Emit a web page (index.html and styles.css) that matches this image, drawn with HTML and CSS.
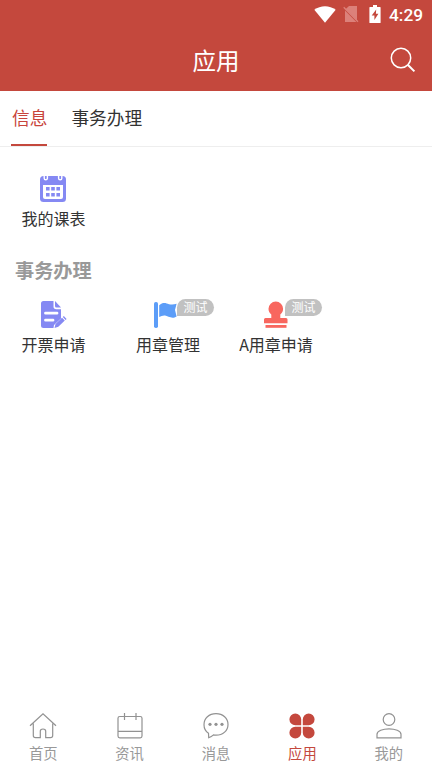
FILE: index.html
```html
<!DOCTYPE html>
<html lang="zh-CN">
<head>
<meta charset="UTF-8">
<meta name="viewport" content="width=device-width, initial-scale=1">
<title>应用</title>
<link rel="stylesheet" href="styles.css">
</head>
<body>
<div class="app">
  <header class="header">
    <div class="status">
      <svg class="wifi" width="22" height="17" viewBox="0 0 22 17"><path d="M.3 3.700C6.500-1 15.500-1 21.700 3.700L11 16.800z" fill="#fff"/></svg>
      <svg class="sim" width="16" height="18" viewBox="0 0 16 18"><path d="M6 1h8v14.500L2.500 4.200zM2 5.600V17h11.400z" fill="#dc817a"/><path d="M.7 2.200L15 16.700" stroke="#dc817a" stroke-width="1.300"/></svg>
      <svg class="battery" width="12" height="18" viewBox="0 0 12 18"><path d="M4 0h4v2h3q.6 0 .6.600v14.800q0 .6-.6.600H1q-.6 0-.6-.6V2.600Q.4 2 1 2h3z" fill="#fff"/><path d="M7.200 4.400L2.700 10.500h2.700v4.600L9.400 8.800H6.900z" fill="#c4483d"/></svg>
      <span class="clock">4:29</span>
    </div>
    <div class="titlebar">
      <h1 class="title">应用</h1>
      <svg class="search" width="28" height="28" viewBox="0 0 28 28" fill="none" stroke="#fff"><circle cx="12" cy="12" r="9.700" stroke-width="1.500"/><path d="M19 19l6.400 6.400" stroke-width="2"/></svg>
    </div>
  </header>
  <nav class="tabs">
    <span class="tab active">信息</span>
    <span class="tab">事务办理</span>
  </nav>
  <main class="content">
    <div class="grid">
      <div class="item">
        <svg width="28" height="28" viewBox="0 0 28 28"><path d="M4.500 2h19Q27 2 27 5.500v19q0 3.500-3.500 3.500h-19Q1 28 1 24.500v-19Q1 2 4.500 2z" fill="#8589f3"/><path d="M4 11h20v12q0 2-2 2H6q-2 0-2-2z" fill="#fff"/><path d="M5.200 1v3.200a1.600 1.600 0 0 0 3.200 0V1M19.600 1v3.200a1.600 1.600 0 0 0 3.200 0V1" fill="none" stroke="#fff" stroke-width="1.400"/><path d="M7 14.700h14M7 20.700h14" stroke="#8589f3" stroke-width="3.400" stroke-dasharray="3.600 1.600"/></svg>
        <span class="label">我的课表</span>
      </div>
    </div>
    <h2 class="section">事务办理</h2>
    <div class="grid second">
      <div class="item">
        <svg width="28" height="28" viewBox="0 0 28 28"><path d="M4.500 1h10v5.500q0 2.800 2.800 2.800H22v9.200L15 25l-.5 3h-10Q2 28 2 25.500v-22Q2 1 4.500 1z" fill="#8589f3"/><path d="M16 1l6 6.500h-4.500q-1.500 0-1.500-1.500z" fill="#8589f3"/><path d="M6.500 13.200H18M6.500 20.200H14" stroke="#fff" stroke-width="2.800" stroke-linecap="round"/><path d="M15.500 28l1-4 6.500-6.300 2.800 2.800-6.500 6.300zM23.800 17l1-.9 2.800 2.800-1 1z" fill="#8589f3"/></svg>
        <span class="label">开票申请</span>
      </div>
      <div class="item">
        <svg width="28" height="28" viewBox="0 0 28 28" fill="#5c9df8"><rect x="0" y="2" width="4" height="26" rx="1.800"/><path d="M5.200 5.200C9 1.600 12 3 15 4.200q3.500 1 7.600-.4L21 10l1.600 6.400C18 19.500 14 16 11 15.500q-3-.3-5.800 1.600z"/></svg>
        <span class="label">用章管理</span>
        <span class="badge">测试</span>
      </div>
      <div class="item">
        <svg width="28" height="28" viewBox="0 0 28 28" fill="#f8675f"><path d="M9.300 18v-3.500C7.500 13.300 6.500 11 6.500 8.800a7.300 7.300 0 0 1 14.600 0c0 2.200-1 4.500-2.800 5.700V18H24q1.500 0 1.500 1.500v3.700H2v-3.700Q2 18 3.500 18z"/><rect x="3.500" y="25" width="21" height="2.800"/></svg>
        <span class="label">A用章申请</span>
        <span class="badge">测试</span>
      </div>
    </div>
  </main>
  <footer class="bottom">
    <div class="nav">
      <svg width="28" height="28" viewBox="0 0 28 28"><path d="M1 13.700L14 1.700l13 12M4.300 11.500v12q0 2.200 2.200 2.200h4.800v-6.500q0-2.200 2.700-2.200t2.700 2.200v6.500h4.800q2.200 0 2.200-2.200v-12"/></svg>
      <span>首页</span>
    </div>
    <div class="nav">
      <svg width="28" height="28" viewBox="0 0 28 28"><rect x="2" y="4.500" width="24" height="21.300" rx="1.800"/><path d="M8.500 1v7M20 1v7M2 19.300h24"/></svg>
      <span>资讯</span>
    </div>
    <div class="nav">
      <svg width="28" height="28" viewBox="0 0 28 28"><path d="M6.500 21.300C3.500 19.300 2 16.300 2 12.700 2 6.300 7 1.700 14 1.700S26 6.300 26 12.400 21 23.200 14 23.200q-1.500 0-2.500-.3Q9.500 24.700 6.700 25.700z"/><g class="dots"><circle cx="8" cy="12.300" r="1.600"/><circle cx="14" cy="12.300" r="1.600"/><circle cx="20" cy="12.300" r="1.600"/></g></svg>
      <span>消息</span>
    </div>
    <div class="nav current">
      <svg width="28" height="28" viewBox="0 0 28 28"><path d="M13.200 13.200H7.300a5.900 5.900 0 1 1 5.900-5.900zM14.800 13.200V7.300a5.900 5.900 0 1 1 5.900 5.900zM13.200 14.800v5.900a5.900 5.900 0 1 1-5.900-5.900zM14.800 14.800h5.900a5.900 5.900 0 1 1-5.900 5.900z"/></svg>
      <span>应用</span>
    </div>
    <div class="nav">
      <svg width="28" height="28" viewBox="0 0 28 28"><circle cx="14" cy="7.500" r="5.800"/><path d="M2 25.800v-3.500C2 19 8 16.800 14 16.800s12 2.200 12 5.500v3.500z"/></svg>
      <span>我的</span>
    </div>
  </footer>
</div>
</body>
</html>
```
FILE: styles.css
```css
* { box-sizing: border-box; }
body {
  margin: 0;
  background: #fff;
  color: #333;
  font-family: "Noto Sans CJK SC", sans-serif;
}
svg { display: block; flex: none; }
.app {
  height: 768px;
  display: flex;
  flex-direction: column;
  overflow: hidden;
}
.header {
  height: 91px;
  flex: none;
  background: #c4483d;
  color: #fff;
}
.status {
  height: 30px;
  display: flex;
  align-items: center;
  justify-content: flex-end;
  padding: 0 10px 2px 0;
}
.sim { margin-left: 7px; }
.battery { margin-left: 10px; }
.clock {
  margin-left: 8px;
  width: 33px;
  font: 500 17.300px/20px Roboto, sans-serif;
  white-space: nowrap;
  padding-top: 2px;
}
.titlebar {
  height: 60px;
  display: grid;
  grid-template-columns: 44px 1fr 44px;
  align-items: center;
}
.title {
  grid-column: 2;
  margin: 0;
  text-align: center;
  font-size: 23.500px;
  line-height: 34px;
  font-weight: 400;
}
.search { margin-left: 1px; }
.tabs {
  height: 56px;
  flex: none;
  display: flex;
  gap: 24px;
  padding-left: 11px;
  border-bottom: 1px solid #eee;
}
.tab {
  height: 55px;
  line-height: 53px;
  font-size: 17.700px;
}
.active {
  color: #c8453c;
  padding-left: 1px;
  border-bottom: 2px solid #c4483d;
}
.content { flex: 1; padding-top: 27px; }
.grid { display: flex; }
.item {
  position: relative;
  width: 108px;
  display: flex;
  flex-direction: column;
  align-items: center;
}
.item:first-child { width: 107px; }
.item:first-child svg { margin-right: 1px; }
.item:nth-child(2) { margin-left: 7px; }
.label {
  margin-top: 4px;
  font-size: 16px;
  line-height: 24px;
  white-space: nowrap;
}
.section {
  margin: 26px 0 0 15px;
  font-size: 19.200px;
  line-height: 28px;
  font-weight: 700;
  color: #999;
}
.second { margin-top: 16px; }
.badge {
  position: absolute;
  left: 63px;
  top: -1px;
  width: 37px;
  height: 17px;
  border-radius: 9px 9px 9px 0;
  background: #c1c1c1;
  color: #fff;
  font-size: 12px;
  line-height: 16px;
  text-align: center;
}
.bottom {
  height: 68px;
  flex: none;
  display: grid;
  grid-template-columns: repeat(5, 1fr);
}
.nav {
  display: flex;
  flex-direction: column;
  align-items: center;
  padding-top: 12px;
  color: #999;
  font-size: 14.300px;
  line-height: 20px;
}
.nav svg {
  margin-bottom: 3px;
  fill: none;
  stroke: #929292;
  stroke-width: 1.200;
}
.nav .dots { fill: #929292; stroke: none; }
.nav.current { color: #c4483d; }
.nav.current svg { fill: #c4483d; stroke: none; }
```
